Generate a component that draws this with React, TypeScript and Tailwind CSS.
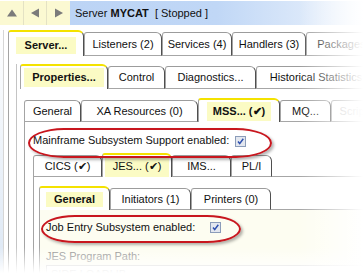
import React from "react";
import clsx from "clsx";

type TabDef = {
  label: React.ReactNode;
  w: string;
  active?: boolean;
  bold?: boolean;
  dim?: boolean;
  hl?: string;
};

const TabStrip = ({ tabs, h, ah }: { tabs: TabDef[]; h: string; ah: string }) => (
  <div className="flex items-end">
    {tabs.map((t, i) => (
      <div
        key={i}
        className={clsx(
          "shrink-0 flex items-center justify-center rounded-tl-[3px] rounded-tr-[6px] border-l border-r border-l-[#a4a4a4] border-r-[#4f4f4f] bg-white",
          t.w,
          t.active
            ? [ah, "border-t-2 border-t-[#f4e200]"]
            : [h, "border-t border-t-[#9c9c9c] border-b border-b-[#a6a6a6]"]
        )}
      >
        <span
          className={clsx(
            "whitespace-nowrap",
            t.bold && "font-bold",
            t.dim ? "text-[#b8b8b8]" : "text-[#111]",
            t.active && ["bg-[#fbfbc4]", t.hl]
          )}
        >
          {t.label}
        </span>
      </div>
    ))}
    <div className="flex-1 min-w-0 border-b border-[#a6a6a6]" />
  </div>
);

const Check = () => (
  <svg width="11" height="11" viewBox="0 0 11 11" className="shrink-0">
    <rect x="0.5" y="0.5" width="10" height="10" fill="#e3e7ef" stroke="#8b9cb9" />
    <path d="M3 5.6 L4.7 7.6 L8.3 2.8" stroke="#2d4fae" strokeWidth="1.5" fill="none" />
  </svg>
);

const Arrow = ({ d }: { d: string }) => (
  <svg width="12" height="12" viewBox="0 0 12 12">
    <path d={d} fill="#7b7b7b" />
  </svg>
);

const ck = "\u2714";

const level1: TabDef[] = [
  { label: "Server...", w: "w-[76px]", active: true, bold: true, hl: "px-[9px] py-[2px] translate-y-[1px]" },
  { label: "Listeners (2)", w: "w-[78px]" },
  { label: "Services (4)", w: "w-[70px]" },
  { label: "Handlers (3)", w: "w-[74px]" },
  { label: "Packages...", w: "w-[80px]" },
];

const level2: TabDef[] = [
  { label: "Properties...", w: "w-[88px]", active: true, bold: true, hl: "px-[8px] py-[3px]" },
  { label: "Control", w: "w-[57px]" },
  { label: "Diagnostics...", w: "w-[91px]" },
  { label: "Historical Statistics", w: "w-[120px]" },
];

const level3: TabDef[] = [
  { label: "General", w: "w-[57px]" },
  { label: "XA Resources (0)", w: "w-[117px]" },
  { label: `MSS... (${ck})`, w: "w-[82px]", active: true, bold: true, hl: "px-[6px] py-[3px]" },
  { label: "MQ...", w: "w-[51px]" },
  { label: "Scripts...", w: "w-[60px]", dim: true },
];

const level4: TabDef[] = [
  { label: `CICS (${ck})`, w: "w-[69px]" },
  { label: `JES... (${ck})`, w: "w-[70px]", active: true, hl: "px-[8px] py-[4px]" },
  { label: "IMS...", w: "w-[59px]" },
  { label: "PL/I", w: "w-[41px]" },
];

const level5: TabDef[] = [
  { label: "General", w: "w-[71px]", active: true, bold: true, hl: "px-[8px] py-[1px]" },
  { label: "Initiators (1)", w: "w-[81px]" },
  { label: "Printers (0)", w: "w-[80px]" },
];

export default function App() {
  return (
    <div className="relative w-[363px] h-[273px] overflow-hidden bg-white font-['Liberation_Sans',Arial,sans-serif] text-[11px] leading-[13px] text-[#111]">
      {/* title bar */}
      <div className="flex h-[25px] pt-px">
        <div className="flex bg-[#fbf9d2]">
          <div className="w-[24px] flex items-center justify-center border-r border-r-[#e4e2c4]">
            <Arrow d="M6 2.5 L11 9.5 L1 9.5 Z" />
          </div>
          <div className="w-[23px] flex items-center justify-center border-r border-r-[#e4e2c4]">
            <Arrow d="M2 6 L10 1.5 L10 10.5 Z" />
          </div>
          <div className="w-[23px] flex items-center justify-center">
            <Arrow d="M10 6 L2 1.5 L2 10.5 Z" />
          </div>
        </div>
        <div className="flex-1 flex items-center pl-[5px] bg-linear-to-r from-[#bcd4f5] via-[#c0d7f6] to-[#eef4fc]">
          <span className="whitespace-nowrap">
            Server <b>MYCAT</b>&nbsp;&nbsp;[ Stopped ]
          </span>
        </div>
      </div>

      {/* nested tab panels */}
      <div className="pt-[5px]">
        <div className="ml-[3px] border-l border-[#d6d6d6] pl-[4px]">
          <TabStrip tabs={level1} h="h-[24px]" ah="h-[26px]" />
          <div className="border-l border-[#a4a4a4] pl-[7px] pt-[8px]">
            <div className="border-l border-[#c4c4c4] pl-[3px]">
              <TabStrip tabs={level2} h="h-[23px]" ah="h-[25px]" />
              <div className="pl-[4px] pt-[9px]">
                <TabStrip tabs={level3} h="h-[22px]" ah="h-[24px]" />
                <div className="border-l border-[#a4a4a4] pl-[8px]">
                  <div className="h-[31px] flex items-end pb-[6px]">
                    <span className="whitespace-nowrap">Mainframe Subsystem Support enabled:</span>
                    <span className="ml-[6px]">
                      <Check />
                    </span>
                  </div>
                  <TabStrip tabs={level4} h="h-[22px]" ah="h-[24px]" />
                  <div className="border-l border-[#a4a4a4] pl-[5px] pt-[9px]">
                    <TabStrip tabs={level5} h="h-[22px]" ah="h-[24px]" />
                    <div className="border-l border-[#a4a4a4] bg-[#fdfdf1] pl-[6px] pt-[11px] h-[80px]">
                      <div className="flex items-center">
                        <span className="whitespace-nowrap">Job Entry Subsystem enabled:</span>
                        <span className="ml-[15px]">
                          <Check />
                        </span>
                      </div>
                      <div className="mt-[16px] text-[#8a8a8a] whitespace-nowrap">JES Program Path:</div>
                      <div className="mt-[2px] h-[20px] bg-white border border-[#c8c8c8] pl-[4px] pt-[2px] text-[#9a9a9a]">
                        SIDE.LOADLIB
                      </div>
                    </div>
                  </div>
                </div>
              </div>
            </div>
          </div>
        </div>
      </div>

      {/* callout ellipses */}
      <div className="absolute left-[28px] top-[128px] w-[244px] h-[30px] rounded-[36px/15px] border-2 border-[#c8161e] shadow-[2px_2px_3px_rgba(0,0,0,0.3)]" />
      <div className="absolute left-[41px] top-[215px] w-[200px] h-[28px] rounded-[34px/14px] border-2 border-[#c8161e] shadow-[2px_2px_3px_rgba(0,0,0,0.3)]" />

      {/* edge fades */}
      <div className="absolute left-0 top-[26px] bottom-0 w-[3px] bg-linear-to-b from-white to-[#dce7f4]" />
      <div className="absolute inset-y-0 right-0 w-[64px] bg-linear-to-r from-white/0 to-white" />
      <div className="absolute inset-x-0 bottom-0 h-[26px] bg-linear-to-b from-white/0 to-white" />
    </div>
  );
}
